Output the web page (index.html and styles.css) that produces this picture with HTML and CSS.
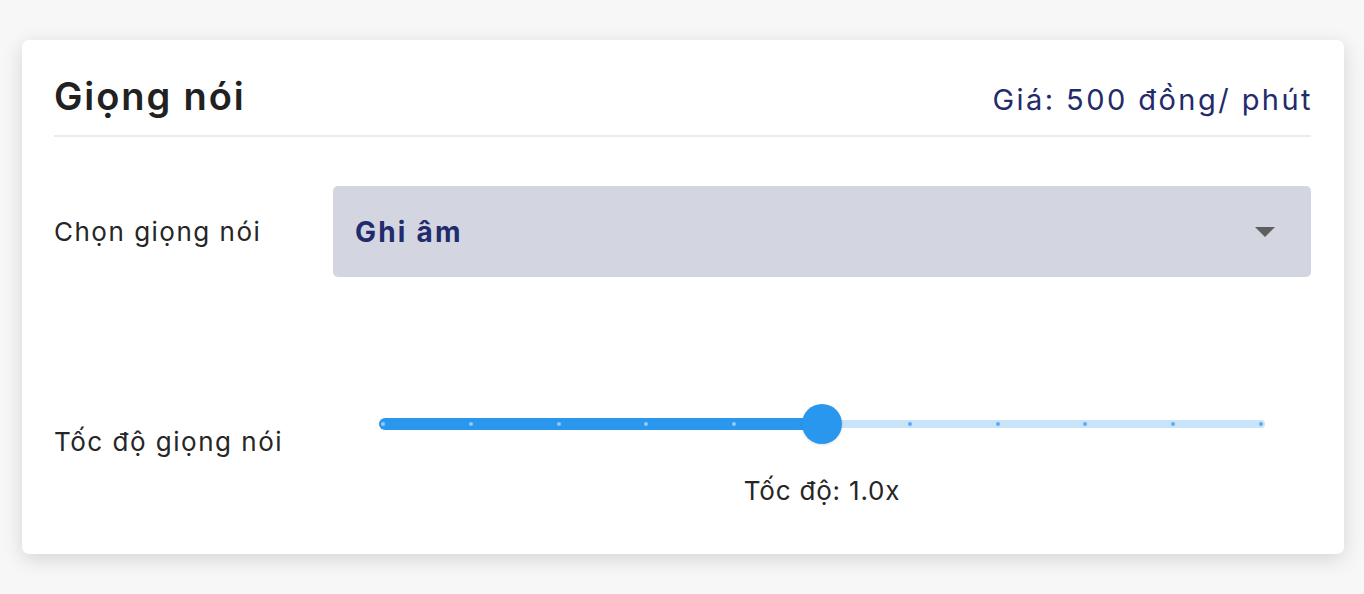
FILE: index.html
```html
<!DOCTYPE html>
<html lang="vi">
<head>
<meta charset="utf-8">
<title>Giọng nói</title>
<link rel="stylesheet" href="styles.css">
</head>
<body>
<main class="page">
  <section class="card">
    <header class="card-header">
      <h1 class="title">Giọng nói</h1>
      <div class="price">Giá: 500 đồng/ phút</div>
    </header>

    <div class="row row-voice">
      <div class="label">Chọn giọng nói</div>
      <div class="select">
        <span class="select-value">Ghi âm</span>
        <span class="select-arrow"></span>
      </div>
    </div>

    <div class="row row-speed">
      <div class="label label-speed">Tốc độ giọng nói</div>
      <div class="speed">
        <div class="slider">
          <div class="rail">
            <div class="track" style="width: 50%"></div>
            <div class="marks">
              <span class="mark on"></span>
              <span class="mark on"></span>
              <span class="mark on"></span>
              <span class="mark on"></span>
              <span class="mark on"></span>
              <span class="mark hidden"></span>
              <span class="mark"></span>
              <span class="mark"></span>
              <span class="mark"></span>
              <span class="mark"></span>
              <span class="mark"></span>
            </div>
            <span class="thumb" style="left: 50%"></span>
          </div>
        </div>
        <div class="speed-value">Tốc độ: 1.0x</div>
      </div>
    </div>
  </section>
</main>
</body>
</html>
```

FILE: styles.css
```css
* { box-sizing: border-box; }

html, body {
  margin: 0;
  padding: 0;
  background: #f7f7f7;
  font-family: Inter, "Noto Sans", "DejaVu Sans", sans-serif;
  color: #242424;
}

.page {
  padding: 40px 20px 40px 22px;
}

.card {
  background: #ffffff;
  border-radius: 7px;
  box-shadow: 0 5px 20px rgba(0, 0, 0, 0.14);
  padding: 28px 33px 0 32px;
  height: 514px;
}

.card-header {
  display: flex;
  justify-content: space-between;
  align-items: baseline;
  border-bottom: 2px solid #ebebeb;
  height: 69px;
}

.title {
  margin: 0;
  font-size: 38px;
  font-weight: 600;
  color: #212121;
  line-height: 56px;
  letter-spacing: 1.9px;
}

.price {
  font-size: 29px;
  color: #222b6b;
  line-height: 56px;
  letter-spacing: 2.45px;
  margin-right: -2px;
}

.row {
  display: grid;
  grid-template-columns: 279px 1fr;
}

.row-voice {
  margin-top: 49px;
  align-items: center;
}

.label {
  font-size: 26px;
  color: #262626;
  letter-spacing: 1.5px;
}

.select {
  height: 91px;
  background: #d3d5e1;
  border-radius: 5px;
  display: flex;
  align-items: center;
  justify-content: space-between;
  padding: 0 36px 0 22px;
}

.select-value {
  font-size: 28px;
  font-weight: 700;
  color: #222b6b;
  letter-spacing: 2.2px;
}

.select-arrow {
  width: 0;
  height: 0;
  border-left: 10px solid transparent;
  border-right: 10px solid transparent;
  border-top: 10px solid #5f5f5f;
}

.row-speed {
  margin-top: 143px;
  align-items: start;
}

.label-speed {
  margin-top: 6px;
}

.speed {
  display: flex;
  flex-direction: column;
  align-items: center;
}

.slider {
  width: 100%;
  padding: 0 46px;
}

.rail {
  position: relative;
  height: 8px;
  border-radius: 4px;
  background: #c8e3fa;
}

.track {
  position: absolute;
  left: 0;
  top: -2px;
  height: 12px;
  border-radius: 6px 0 0 6px;
  background: #2a97ef;
}

.marks {
  position: absolute;
  inset: 0;
  display: flex;
  justify-content: space-between;
  align-items: center;
  padding: 0 2px;
}

.mark {
  width: 4px;
  height: 4px;
  border-radius: 50%;
  background: #5eaef1;
}

.mark.on {
  background: #93c9f6;
}

.mark.hidden {
  visibility: hidden;
}

.thumb {
  position: absolute;
  top: 50%;
  width: 40px;
  height: 40px;
  margin: -20px 0 0 -20px;
  border-radius: 50%;
  background: #2a97ef;
  box-shadow: 0 1px 3px rgba(0, 0, 0, 0.12);
}

.speed-value {
  margin-top: 47px;
  font-size: 26px;
  color: #262626;
  letter-spacing: 0.8px;
}
```
